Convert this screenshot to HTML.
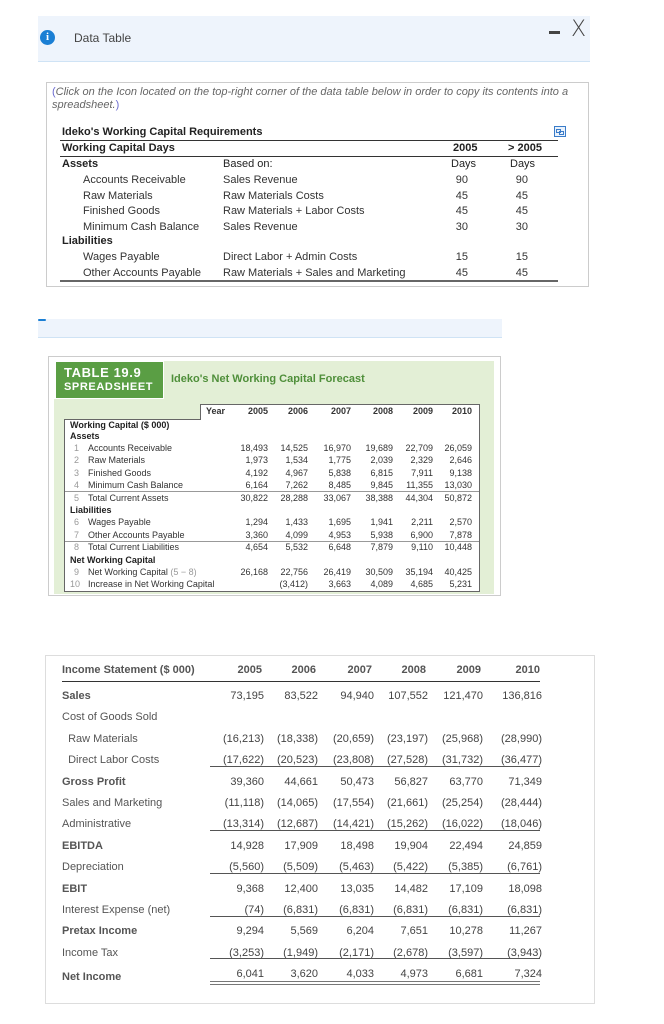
<!DOCTYPE html>
<html><head><meta charset="utf-8"><style>
*{margin:0;padding:0;box-sizing:border-box}
body{width:664px;height:1024px;background:#fff;position:relative;font-family:"Liberation Sans",Arial,sans-serif;color:#222;overflow:hidden}
.a{position:absolute;white-space:nowrap}
.r{text-align:right}
.b{font-weight:bold}
.t1{font-size:11px;line-height:13px}
.t2{font-size:9px;line-height:12.4px;color:#333}
.t3{font-size:11px;line-height:13px;color:#444}
.ln{position:absolute;background:#333}
.g{color:#999;display:inline-block;width:14px}
</style></head><body>
<!-- header band -->
<div class="a" style="left:38px;top:16px;width:552px;height:46px;background:#eef4fc;border-bottom:1px solid #cfe3f5"></div>
<div class="a" style="left:40px;top:30px;width:15px;height:15px;border-radius:50%;background:#1b7fd4;color:#fff;font-size:11px;font-weight:bold;text-align:center;line-height:15px;font-family:'Liberation Serif',serif">i</div>
<div class="a" style="left:74px;top:31px;font-size:12px;color:#444">Data Table</div>
<div class="a" style="left:549px;top:31px;width:11px;height:3px;background:#444"></div>
<div class="a" style="left:571px;top:17px;font-size:22px;color:#444;font-family:'DejaVu Sans',sans-serif;font-weight:300">X</div>

<!-- box1 -->
<div class="a" style="left:46px;top:82px;width:543px;height:205px;border:1px solid #ccc"></div>
<div class="a" style="left:52px;top:86px;font-size:11px;line-height:13px;font-style:italic;color:#666;white-space:normal;width:532px"><span style="color:#6a6ad0;font-style:normal">(</span>Click on the Icon located on the top-right corner of the data table below in order to copy its contents into a spreadsheet.<span style="color:#6a6ad0;font-style:normal">)</span></div>
<div class="a" style="left:554px;top:126px;width:12px;height:11px;border:1px solid #3a7cc9;background:#eaf2fc"><div style="position:absolute;left:1px;top:2px;width:5px;height:4px;border:1px solid #3a7cc9"></div><div style="position:absolute;left:4px;top:4px;width:5px;height:4px;border:1px solid #3a7cc9"></div></div>
<div class="a t1 b" style="left:62px;top:126px">Ideko's Working Capital Requirements</div>
<div class="ln" style="left:60px;top:140px;width:498px;height:1px"></div>
<div class="a t1 b" style="left:62px;top:142px">Working Capital Days</div>
<div class="a t1 b" style="left:453px;top:142px">2005</div>
<div class="a t1 b" style="left:508px;top:142px">&gt; 2005</div>
<div class="ln" style="left:60px;top:156px;width:498px;height:1px"></div>
<div class="a t1 b" style="left:62px;top:158px">Assets</div>
<div class="a t1" style="left:223px;top:158px">Based on:</div>
<div class="a t1" style="left:451px;top:158px">Days</div>
<div class="a t1" style="left:510px;top:158px">Days</div>
<div class="a t1" style="left:83px;top:173px;line-height:15.5px;color:#333">Accounts Receivable<br>Raw Materials<br>Finished Goods<br>Minimum Cash Balance</div>
<div class="a t1" style="left:223px;top:173px;line-height:15.5px;color:#333">Sales Revenue<br>Raw Materials Costs<br>Raw Materials + Labor Costs<br>Sales Revenue</div>
<div class="a t1 r" style="left:440px;width:28px;top:173px;line-height:15.5px;color:#333">90<br>45<br>45<br>30</div>
<div class="a t1 r" style="left:500px;width:28px;top:173px;line-height:15.5px;color:#333">90<br>45<br>45<br>30</div>
<div class="a t1 b" style="left:62px;top:235px">Liabilities</div>
<div class="a t1" style="left:83px;top:250px;line-height:15.5px;color:#333">Wages Payable<br>Other Accounts Payable</div>
<div class="a t1" style="left:223px;top:250px;line-height:15.5px;color:#333">Direct Labor + Admin Costs<br>Raw Materials + Sales and Marketing</div>
<div class="a t1 r" style="left:440px;width:28px;top:250px;line-height:15.5px;color:#333">15<br>45</div>
<div class="a t1 r" style="left:500px;width:28px;top:250px;line-height:15.5px;color:#333">15<br>45</div>
<div class="ln" style="left:60px;top:280px;width:498px;height:2px;background:#666"></div>

<!-- band 2 -->
<div class="a" style="left:38px;top:319px;width:464px;height:19px;background:#eef4fc;border-bottom:1px solid #cfe3f5"></div>
<div class="a" style="left:38px;top:319px;width:8px;height:2px;background:#1b7fd4;border-radius:2px"></div>

<!-- box2 -->
<div class="a" style="left:48px;top:356px;width:453px;height:240px;border:1px solid #ccc"></div>
<div class="a" style="left:54px;top:361px;width:440px;height:233px;background:#e3efd6"></div>
<div class="a" style="left:54px;top:361px;width:110px;height:38px;background:#fff"></div>
<div class="a" style="left:56px;top:362px;width:107px;height:36px;background:#5a9e44;color:#fff;font-weight:bold;padding:4px 0 0 8px;font-size:13px;line-height:13px;letter-spacing:0.6px">TABLE 19.9<br><span style="font-size:11px">SPREADSHEET</span></div>
<div class="a b" style="left:171px;top:373px;font-size:11px;color:#4f8f3a">Ideko's Net Working Capital Forecast</div>
<div class="a" style="left:64px;top:404px;width:416px;height:188px;background:#fff;border:1px solid #666"></div>
<div class="a" style="left:64px;top:404px;width:137px;height:16px;background:#e3efd6;border-bottom:1px solid #666;border-right:1px solid #666"></div>
<div class="a t2 b" style="left:206px;top:405px">Year</div>
<div class="a t2 b r" style="left:228px;width:40px;top:405px">2005</div>
<div class="a t2 b r" style="left:268px;width:40px;top:405px">2006</div>
<div class="a t2 b r" style="left:311px;width:40px;top:405px">2007</div>
<div class="a t2 b r" style="left:353px;width:40px;top:405px">2008</div>
<div class="a t2 b r" style="left:393px;width:40px;top:405px">2009</div>
<div class="a t2 b r" style="left:432px;width:40px;top:405px">2010</div>
<div class="a t2 b" style="left:70px;top:420px;line-height:11px;color:#222">Working Capital ($ 000)<br>Assets</div>
<div class="a t2" style="left:74px;top:442px"><span class="g">1</span>Accounts Receivable<br><span class="g">2</span>Raw Materials<br><span class="g">3</span>Finished Goods<br><span class="g">4</span>Minimum Cash Balance<br><span class="g">5</span>Total Current Assets<br><b style="color:#222;margin-left:-4px">Liabilities</b><br><span class="g">6</span>Wages Payable<br><span class="g">7</span>Other Accounts Payable<br><span class="g">8</span>Total Current Liabilities<br><b style="color:#222;margin-left:-4px">Net Working Capital</b><br><span class="g">9</span>Net Working Capital <span style="color:#999">(5 − 8)</span><br><span class="g" style="margin-left:-4px;width:18px">10</span>Increase in Net Working Capital</div>
<div class="a t2 r" style="left:228px;width:40px;top:442px">18,493<br>1,973<br>4,192<br>6,164<br>30,822<br>&nbsp;<br>1,294<br>3,360<br>4,654<br>&nbsp;<br>26,168<br>&nbsp;</div>
<div class="a t2 r" style="left:268px;width:40px;top:442px">14,525<br>1,534<br>4,967<br>7,262<br>28,288<br>&nbsp;<br>1,433<br>4,099<br>5,532<br>&nbsp;<br>22,756<br>(3,412)</div>
<div class="a t2 r" style="left:311px;width:40px;top:442px">16,970<br>1,775<br>5,838<br>8,485<br>33,067<br>&nbsp;<br>1,695<br>4,953<br>6,648<br>&nbsp;<br>26,419<br>3,663</div>
<div class="a t2 r" style="left:353px;width:40px;top:442px">19,689<br>2,039<br>6,815<br>9,845<br>38,388<br>&nbsp;<br>1,941<br>5,938<br>7,879<br>&nbsp;<br>30,509<br>4,089</div>
<div class="a t2 r" style="left:393px;width:40px;top:442px">22,709<br>2,329<br>7,911<br>11,355<br>44,304<br>&nbsp;<br>2,211<br>6,900<br>9,110<br>&nbsp;<br>35,194<br>4,685</div>
<div class="a t2 r" style="left:432px;width:40px;top:442px">26,059<br>2,646<br>9,138<br>13,030<br>50,872<br>&nbsp;<br>2,570<br>7,878<br>10,448<br>&nbsp;<br>40,425<br>5,231</div>
<div class="ln" style="left:65px;top:491px;width:414px;height:1px;background:#999"></div>
<div class="ln" style="left:65px;top:541px;width:414px;height:1px;background:#999"></div>

<!-- box3 -->
<div class="a" style="left:45px;top:655px;width:550px;height:349px;border:1px solid #ddd"></div>
<div class="a t3 b" style="left:62px;top:664px;color:#555">Income Statement ($ 000)</div>
<div class="a t3 b r" style="left:212px;width:50px;top:664px;color:#555">2005</div>
<div class="a t3 b r" style="left:266px;width:50px;top:664px;color:#555">2006</div>
<div class="a t3 b r" style="left:322px;width:50px;top:664px;color:#555">2007</div>
<div class="a t3 b r" style="left:376px;width:50px;top:664px;color:#555">2008</div>
<div class="a t3 b r" style="left:431px;width:50px;top:664px;color:#555">2009</div>
<div class="a t3 b r" style="left:490px;width:50px;top:664px;color:#555">2010</div>
<div class="ln" style="left:62px;top:681px;width:478px;height:1px"></div>
<div class="a t3" style="left:62px;top:686px;line-height:21.4px;color:#555"><b>Sales</b><br>Cost of Goods Sold<br>&nbsp;&nbsp;Raw Materials<br>&nbsp;&nbsp;Direct Labor Costs<br><b>Gross Profit</b><br>Sales and Marketing<br>Administrative<br><b>EBITDA</b><br>Depreciation<br><b>EBIT</b><br>Interest Expense (net)<br><b>Pretax Income</b><br>Income Tax<br><span style="position:relative;top:3px"><b>Net Income</b></span></div>
<div class="a t3 r" style="left:202px;width:62px;top:686px;line-height:21.4px">73,195<br>&nbsp;<br>(16,213)<br>(17,622)<br>39,360<br>(11,118)<br>(13,314)<br>14,928<br>(5,560)<br>9,368<br>(74)<br>9,294<br>(3,253)<br>6,041</div>
<div class="a t3 r" style="left:256px;width:62px;top:686px;line-height:21.4px">83,522<br>&nbsp;<br>(18,338)<br>(20,523)<br>44,661<br>(14,065)<br>(12,687)<br>17,909<br>(5,509)<br>12,400<br>(6,831)<br>5,569<br>(1,949)<br>3,620</div>
<div class="a t3 r" style="left:312px;width:62px;top:686px;line-height:21.4px">94,940<br>&nbsp;<br>(20,659)<br>(23,808)<br>50,473<br>(17,554)<br>(14,421)<br>18,498<br>(5,463)<br>13,035<br>(6,831)<br>6,204<br>(2,171)<br>4,033</div>
<div class="a t3 r" style="left:366px;width:62px;top:686px;line-height:21.4px">107,552<br>&nbsp;<br>(23,197)<br>(27,528)<br>56,827<br>(21,661)<br>(15,262)<br>19,904<br>(5,422)<br>14,482<br>(6,831)<br>7,651<br>(2,678)<br>4,973</div>
<div class="a t3 r" style="left:421px;width:62px;top:686px;line-height:21.4px">121,470<br>&nbsp;<br>(25,968)<br>(31,732)<br>63,770<br>(25,254)<br>(16,022)<br>22,494<br>(5,385)<br>17,109<br>(6,831)<br>10,278<br>(3,597)<br>6,681</div>
<div class="a t3 r" style="left:480px;width:62px;top:686px;line-height:21.4px">136,816<br>&nbsp;<br>(28,990)<br>(36,477)<br>71,349<br>(28,444)<br>(18,046)<br>24,859<br>(6,761)<br>18,098<br>(6,831)<br>11,267<br>(3,943)<br>7,324</div>
<div class="ln" style="left:210px;top:766px;width:330px;height:1px;background:#555"></div>
<div class="ln" style="left:210px;top:830px;width:330px;height:1px;background:#555"></div>
<div class="ln" style="left:210px;top:873px;width:330px;height:1px;background:#555"></div>
<div class="ln" style="left:210px;top:916px;width:330px;height:1px;background:#555"></div>
<div class="ln" style="left:210px;top:958px;width:330px;height:1px;background:#555"></div>
<div class="ln" style="left:210px;top:981px;width:330px;height:1px;background:#777"></div>
<div class="ln" style="left:210px;top:984px;width:330px;height:1px;background:#777"></div>
</body></html>
